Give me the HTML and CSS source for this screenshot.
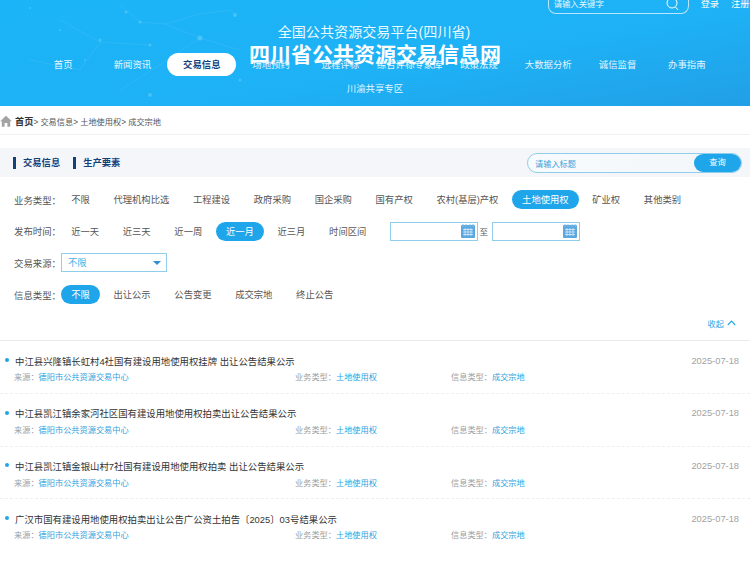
FILE: index.html
```html
<!DOCTYPE html>
<html lang="zh">
<head>
<meta charset="utf-8">
<title>四川省公共资源交易信息网</title>
<link rel="stylesheet" href="styles.css">
</head>
<body>
<header class="hero">
  <svg class="stars" width="750" height="106" viewBox="0 0 750 106">
    <g fill="none" stroke="#6fd0f5" stroke-width=".5" opacity=".4">
      <path d="M120 5L140 22 165 24 200 14 232 10 235 16M165 24L200 38 240 50M60 20L100 42 150 45"/>
      <path d="M30 60L80 70 100 42M200 38L152 70 120 90"/>
    </g>
    <g fill="#7fdcf7" opacity=".4">
      <circle cx="126" cy="12" r="1.5"/><circle cx="140" cy="22" r="1.5"/><circle cx="200" cy="38" r="2.5"/>
      <circle cx="235" cy="15" r="2"/><circle cx="100" cy="40" r="1.5"/><circle cx="150" cy="45" r="1.5"/>
      <circle cx="150" cy="95" r="2"/><circle cx="240" cy="80" r="1.5"/><circle cx="30" cy="8" r="1"/>
      <circle cx="60" cy="30" r="1"/><circle cx="85" cy="60" r="1"/><circle cx="180" cy="60" r="1"/>
    </g>
  </svg>
  <div class="topbar">
    <div class="topsearch">
      <span>请输入关键字</span>
      <svg class="topsearch-icon" width="15" height="15" viewBox="0 0 15 15"><circle cx="7" cy="6" r="5" fill="none" stroke="#fff" stroke-width="1"/><path d="M10.5 10L13 13" stroke="#fff" stroke-width="1"/></svg>
    </div>
    <a class="toplink">登录</a>
    <a class="toplink toplink-last">注册</a>
  </div>
  <div class="titles">
    <div class="title-sub">全国公共资源交易平台(四川省)</div>
    <div class="title-main">四川省公共资源交易信息网</div>
  </div>
  <nav class="nav">
    <a class="nav-item">首页</a>
    <a class="nav-item">新闻资讯</a>
    <a class="nav-item nav-on">交易信息</a>
    <a class="nav-item">场地预约</a>
    <a class="nav-item">远程评标</a>
    <a class="nav-item">综合评标专家库</a>
    <a class="nav-item">政策法规</a>
    <a class="nav-item">大数据分析</a>
    <a class="nav-item">诚信监督</a>
    <a class="nav-item">办事指南</a>
    <a class="nav-item">川渝共享专区</a>
  </nav>
</header>

<div class="crumbs">
  <svg class="home" width="12" height="12" viewBox="0 0 12 12"><path d="M6 .8L.2 6.2H1.8V11.8H4.6V8H7.4V11.8H10.2V6.2H11.8Z" fill="#a3a3a3"/></svg>
  <b class="crumb-home">首页</b><span>&gt; 交易信息&gt; 土地使用权&gt; 成交宗地</span>
</div>

<section class="tabs">
  <div class="tab">交易信息</div>
  <div class="tab">生产要素</div>
  <div class="search">
    <span class="search-text">请输入标题</span>
    <span class="search-btn">查询</span>
  </div>
</section>

<section class="filters">
  <div class="row">
    <span class="label">业务类型：</span>
    <a class="opt">不限</a><a class="opt">代理机构比选</a><a class="opt">工程建设</a><a class="opt">政府采购</a><a class="opt">国企采购</a><a class="opt">国有产权</a><a class="opt">农村(基层)产权</a><a class="opt on">土地使用权</a><a class="opt">矿业权</a><a class="opt">其他类别</a>
  </div>
  <div class="row">
    <span class="label">发布时间：</span>
    <a class="opt">近一天</a><a class="opt">近三天</a><a class="opt">近一周</a><a class="opt on">近一月</a><a class="opt">近三月</a><a class="opt">时间区间</a>
    <span class="date date-first">
      <svg class="cal" width="14" height="14" viewBox="0 0 14 14"><rect y="1" width="14" height="13" rx="1" fill="#5ba7e0"/><path d="M2 0v3M5 0v3M9 0v3M12 0v3" stroke="#7fbde8"/><path d="M2 5.500h10M2 8h10M2 10.500h10M4 4v8M7 4v8M10 4v8" stroke="#d8ecfa" stroke-width=".8"/></svg>
    </span>
    <span class="to">至</span>
    <span class="date">
      <svg class="cal" width="14" height="14" viewBox="0 0 14 14"><rect y="1" width="14" height="13" rx="1" fill="#5ba7e0"/><path d="M2 0v3M5 0v3M9 0v3M12 0v3" stroke="#7fbde8"/><path d="M2 5.500h10M2 8h10M2 10.500h10M4 4v8M7 4v8M10 4v8" stroke="#d8ecfa" stroke-width=".8"/></svg>
    </span>
  </div>
  <div class="row">
    <span class="label">交易来源：</span>
    <span class="select">不限<i class="caret"></i></span>
  </div>
  <div class="row">
    <span class="label">信息类型：</span>
    <a class="opt on">不限</a><a class="opt">出让公示</a><a class="opt">公告变更</a><a class="opt">成交宗地</a><a class="opt">终止公告</a>
  </div>
</section>

<div class="collapse">收起
  <svg width="9" height="6" viewBox="0 0 9 6"><path d="M.8 5L4.500 1.200 8.200 5" fill="none" stroke="#29a8e6" stroke-width="1.200"/></svg>
</div>

<ul class="list">
  <li class="item">
    <div class="item-head"><span class="item-title">中江县兴隆镇长虹村4社国有建设用地使用权挂牌 出让公告结果公示</span><span class="item-date">2025-07-18</span></div>
    <div class="meta"><span class="meta-a">来源：<em>德阳市公共资源交易中心</em></span><span class="meta-b">业务类型：<em>土地使用权</em></span><span>信息类型：<em>成交宗地</em></span></div>
  </li>
  <li class="item">
    <div class="item-head"><span class="item-title">中江县凯江镇余家河社区国有建设用地使用权拍卖出让公告结果公示</span><span class="item-date">2025-07-18</span></div>
    <div class="meta"><span class="meta-a">来源：<em>德阳市公共资源交易中心</em></span><span class="meta-b">业务类型：<em>土地使用权</em></span><span>信息类型：<em>成交宗地</em></span></div>
  </li>
  <li class="item">
    <div class="item-head"><span class="item-title">中江县凯江镇金银山村7社国有建设用地使用权拍卖 出让公告结果公示</span><span class="item-date">2025-07-18</span></div>
    <div class="meta"><span class="meta-a">来源：<em>德阳市公共资源交易中心</em></span><span class="meta-b">业务类型：<em>土地使用权</em></span><span>信息类型：<em>成交宗地</em></span></div>
  </li>
  <li class="item">
    <div class="item-head"><span class="item-title">广汉市国有建设用地使用权拍卖出让公告广公资土拍告〔2025〕03号结果公示</span><span class="item-date">2025-07-18</span></div>
    <div class="meta"><span class="meta-a">来源：<em>德阳市公共资源交易中心</em></span><span class="meta-b">业务类型：<em>土地使用权</em></span><span>信息类型：<em>成交宗地</em></span></div>
  </li>
</ul>
</body>
</html>
```
FILE: styles.css
```css
* { box-sizing: border-box; }
html, body { margin: 0; padding: 0; }
body {
  width: 750px;
  height: 563px;
  overflow: hidden;
  background: #fff;
  color: #444;
  font-family: "Liberation Sans", "Noto Sans CJK SC", sans-serif;
  font-size: 9.3px;
}
a { color: inherit; text-decoration: none; }
em { font-style: normal; }

.hero {
  position: relative;
  height: 106px;
  background: linear-gradient(170deg, #1cb4f8 0%, #1eb1f5 60%, #219fe6 100%);
  color: #fff;
  overflow: hidden;
}
.stars { position: absolute; left: 0; top: 0; }
.topbar {
  position: relative;
  height: 14px;
  display: flex;
  justify-content: flex-end;
  align-items: flex-start;
}
.topsearch {
  position: relative;
  width: 141px;
  height: 14px;
  border: 1px solid #b8e6fb;
  border-top: 0;
  border-radius: 0 0 8px 8px;
  padding-left: 5px;
  font-size: 8.4px;
  line-height: 9px;
  color: #e6f7ff;
}
.topsearch-icon { position: absolute; right: 8px; top: -3px; }
.toplink { margin-left: 12px; font-size: 9.2px; line-height: 8px; }
.toplink-last { width: 19px; white-space: nowrap; }
.titles {
  position: absolute;
  left: 0;
  right: 0;
  top: 22px;
  text-align: center;
}
.title-sub { font-size: 14.1px; line-height: 20px; color: #eaf8ff; padding-right: 2px; }
.title-main { font-size: 21px; line-height: 25px; font-weight: 700; }
.nav {
  position: absolute;
  left: 28.5px;
  top: 53px;
  width: 693px;
  display: flex;
  flex-wrap: wrap;
  justify-content: center;
}
.nav-item {
  width: 69.3px;
  height: 23px;
  margin-bottom: 1px;
  line-height: 24px;
  text-align: center;
  font-size: 9.4px;
  white-space: nowrap;
  color: #e3f6ff;
}
.nav-on {
  background: #fff;
  border-radius: 12px;
  color: #14417a;
  font-weight: 700;
}

.crumbs {
  display: flex;
  align-items: center;
  height: 29px;
  padding-top: 1px;
  border-bottom: 1px solid #f0f0f0;
  font-size: 8.2px;
  color: #555;
}
.home { margin-right: 3px; }
.crumb-home { font-size: 9.2px; color: #333; }

.tabs {
  display: flex;
  align-items: center;
  height: 29px;
  margin-top: 13px;
  padding-left: 13px;
  background: #f4f6fa;
}
.tab {
  border-left: 3px solid #14417a;
  height: 12px;
  padding-left: 7px;
  margin-right: 13px;
  font-size: 9.3px;
  line-height: 12px;
  font-weight: 700;
  color: #14417a;
}
.search {
  margin-left: auto;
  margin-right: 8px;
  width: 215px;
  height: 20px;
  display: flex;
  justify-content: space-between;
  align-items: center;
  padding-left: 7px;
  border: 1px solid #8fcdea;
  border-radius: 10px;
  background: #fff linear-gradient(90deg, #f8fbfd, #f3f6fa);
  color: #3aa5dc;
  font-size: 8.2px;
}
.search-btn {
  width: 47px;
  height: 18px;
  line-height: 18px;
  text-align: center;
  border-radius: 9px;
  background: #1fa5ea;
  color: #fff;
  font-size: 8.2px;
}

.filters { padding: 7px 0 0 14px; }
.row {
  display: flex;
  align-items: center;
  height: 31.6px;
  white-space: nowrap;
}
.label { width: 47px; color: #555; font-size: 9.4px; }
.opt {
  height: 19px;
  line-height: 21px;
  padding: 0 10.2px;
  margin-right: 3.3px;
  border-radius: 10px;
  color: #555;
  flex: none;
}
.on { background: #1fa5ea; color: #fff; }
.date {
  position: relative;
  width: 88px;
  height: 19px;
  border: 1px solid #8fcdea;
  flex: none;
}
.date-first { margin-left: 10px; }
.cal { position: absolute; right: 2px; top: 1px; }
.to { width: 14px; text-align: center; font-size: 8.5px; color: #555; padding-right: 2px; }
.select {
  position: relative;
  width: 106px;
  height: 19px;
  line-height: 19px;
  padding-left: 6px;
  border: 1px solid #8fcdea;
  color: #46aee2;
}
.caret {
  position: absolute;
  right: 5px;
  top: 7px;
  border: 4px solid transparent;
  border-top: 4px solid #2d8fd0;
  border-bottom: 0;
}

.collapse {
  display: flex;
  justify-content: flex-end;
  align-items: center;
  gap: 3px;
  height: 31px;
  padding: 0 14px 4px 0;
  color: #29a8e6;
  font-size: 8.2px;
  border-bottom: 1px solid #eaeaea;
}

.list { list-style: none; margin: 0; padding: 0; }
.item {
  position: relative;
  height: 52.7px;
  padding: 11.4px 11px 0 15px;
  border-bottom: 1px dashed #efefef;
}
.item:last-child { border-bottom: 0; }
.item::before {
  content: "";
  position: absolute;
  left: 4.5px;
  top: 16.5px;
  width: 4px;
  height: 4px;
  border-radius: 50%;
  background: #1fa5ea;
}
.item-head {
  display: flex;
  justify-content: space-between;
  align-items: center;
  height: 16px;
}
.item-title { font-size: 9.4px; color: #333; }
.item-date { font-size: 9.3px; color: #a2a2a2; }
.meta {
  display: flex;
  margin-top: .6px;
  margin-left: -1px;
  height: 14px;
  align-items: center;
  font-size: 8.2px;
  color: #a0a0a0;
}
.meta em { color: #2fa3e0; }
.meta-a { width: 281px; }
.meta-b { width: 156px; }
```
